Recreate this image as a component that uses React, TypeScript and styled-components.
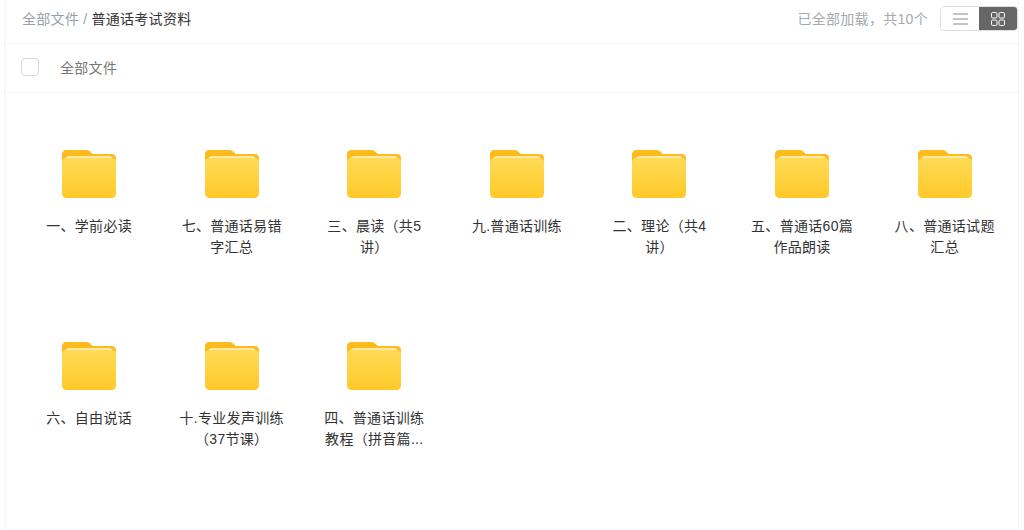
import React from "react";
import styled, { createGlobalStyle } from "styled-components";

const Global = createGlobalStyle`
  html, body { margin: 0; padding: 0; background: #fff; overflow: hidden; }
  body { font-family: "Liberation Sans", "Noto Sans CJK SC", sans-serif; }
`;

const Page = styled.div`
  width: 1024px;
  height: 530px;
  box-sizing: border-box;
  padding: 0 5px 0 4px;
  overflow: hidden;
`;
const Panel = styled.div`
  height: 530px;
  border-left: 1px solid #f3f4f5;
  border-right: 1px solid #f3f4f5;
  box-sizing: border-box;
`;
const Toolbar = styled.div`
  height: 43px;
  display: flex;
  align-items: center;
  justify-content: space-between;
  padding: 0 0 6px 17px;
  box-sizing: border-box;
  background: #fff;
`;
const Crumbs = styled.div`
  font-size: 14px;
  line-height: 20px;
  letter-spacing: 0.3px;
  color: #999fa8;
  display: flex;
  gap: 4px;
`;
const Current = styled.span`
  color: #333;
`;
const ToolRight = styled.div`
  display: flex;
  align-items: center;
  gap: 12px;
`;
const Count = styled.span`
  font-size: 14px;
  line-height: 20px;
  letter-spacing: 0.3px;
  color: #a6a9af;
`;
const Switch = styled.div`
  display: flex;
  width: 78px;
  height: 25px;
  box-sizing: border-box;
  border: 1px solid #dcdfe6;
  border-radius: 4px;
  overflow: hidden;
`;
const SwitchBtn = styled.div<{ $active?: boolean }>`
  flex: 1;
  display: flex;
  align-items: center;
  justify-content: center;
  background: ${(p) => (p.$active ? "#666" : "#fff")};
`;
const HeadRow = styled.div`
  height: 50px;
  border-top: 1px solid #f3f4f5;
  border-bottom: 1px solid #f3f4f5;
  display: flex;
  align-items: center;
  box-sizing: border-box;
  padding: 0 0 2px 16px;
  gap: 21px;
`;
const Check = styled.div`
  width: 16px;
  height: 16px;
  border: 1px solid #d8d8d8;
  border-radius: 4px;
  background: #fff;
`;
const HeadLabel = styled.span`
  margin-top: 2px;
  font-size: 14px;
  line-height: 20px;
  letter-spacing: 0.3px;
  color: #777;
`;
const Grid = styled.div`
  display: grid;
  grid-template-columns: repeat(7, 142.6px);
  grid-auto-rows: 192.4px;
  padding: 57px 0 0 12.8px;
`;
const Item = styled.div`
  display: flex;
  flex-direction: column;
  align-items: center;
`;
const Name = styled.div`
  width: 108px;
  margin-top: 18px;
  font-size: 14px;
  line-height: 21px;
  letter-spacing: 0.3px;
  color: #333;
  text-align: center;
  word-break: break-all;
`;
const FolderSvg = styled.svg`
  display: block;
  width: 54px;
  height: 48px;
`;

const Folder = () => (
  <FolderSvg viewBox="0 0 54 48">
    <defs>
      <linearGradient id="fbody" x1="0" y1="0" x2="0" y2="1">
        <stop offset="0" stopColor="#ffdb58" />
        <stop offset="1" stopColor="#ffc928" />
      </linearGradient>
    </defs>
    <path
      d="M4 0h20c2 0 3 .6 4.400 1.800L31 4h19c2.200 0 4 1.800 4 4v10H0V4c0-2.200 1.800-4 4-4z"
      fill="#ffbb1c"
    />
    <path d="M7 6h40c1.600 0 3 .8 3.600 2.500H3.400C4 6.800 5.400 6 7 6z" fill="#ffeaa6" />
    <rect x="0" y="8" width="54" height="40" rx="4.500" fill="url(#fbody)" />
  </FolderSvg>
);

const names = [
  "一、学前必读",
  "七、普通话易错字汇总",
  "三、晨读（共5讲）",
  "九.普通话训练",
  "二、理论（共4讲）",
  "五、普通话60篇作品朗读",
  "八、普通话试题汇总",
  "六、自由说话",
  "十.专业发声训练（37节课）",
  "四、普通话训练教程（拼音篇...",
];

export default function App() {
  return (
    <Page>
      <Global />
      <Panel>
        <Toolbar>
          <Crumbs>
            <span>全部文件</span>
            <span>/</span>
            <Current>普通话考试资料</Current>
          </Crumbs>
          <ToolRight>
            <Count>已全部加载，共10个</Count>
            <Switch>
              <SwitchBtn>
                <svg width="15" height="12" viewBox="0 0 15 12">
                  <path d="M0 1h15M0 6h15M0 11h15" stroke="#888" strokeWidth="1" fill="none" />
                </svg>
              </SwitchBtn>
              <SwitchBtn $active>
                <svg width="14" height="14" viewBox="0 0 14 14" fill="none" stroke="#fff" strokeWidth="1">
                  <rect x="0.500" y="0.500" width="5.500" height="5.500" rx="1.200" />
                  <rect x="8" y="0.500" width="5.500" height="5.500" rx="1.200" />
                  <rect x="0.500" y="8" width="5.500" height="5.500" rx="1.200" />
                  <rect x="8" y="8" width="5.500" height="5.500" rx="1.200" />
                </svg>
              </SwitchBtn>
            </Switch>
          </ToolRight>
        </Toolbar>
        <HeadRow>
          <Check />
          <HeadLabel>全部文件</HeadLabel>
        </HeadRow>
        <Grid>
          {names.map((n) => (
            <Item key={n}>
              <Folder />
              <Name>{n}</Name>
            </Item>
          ))}
        </Grid>
      </Panel>
    </Page>
  );
}
